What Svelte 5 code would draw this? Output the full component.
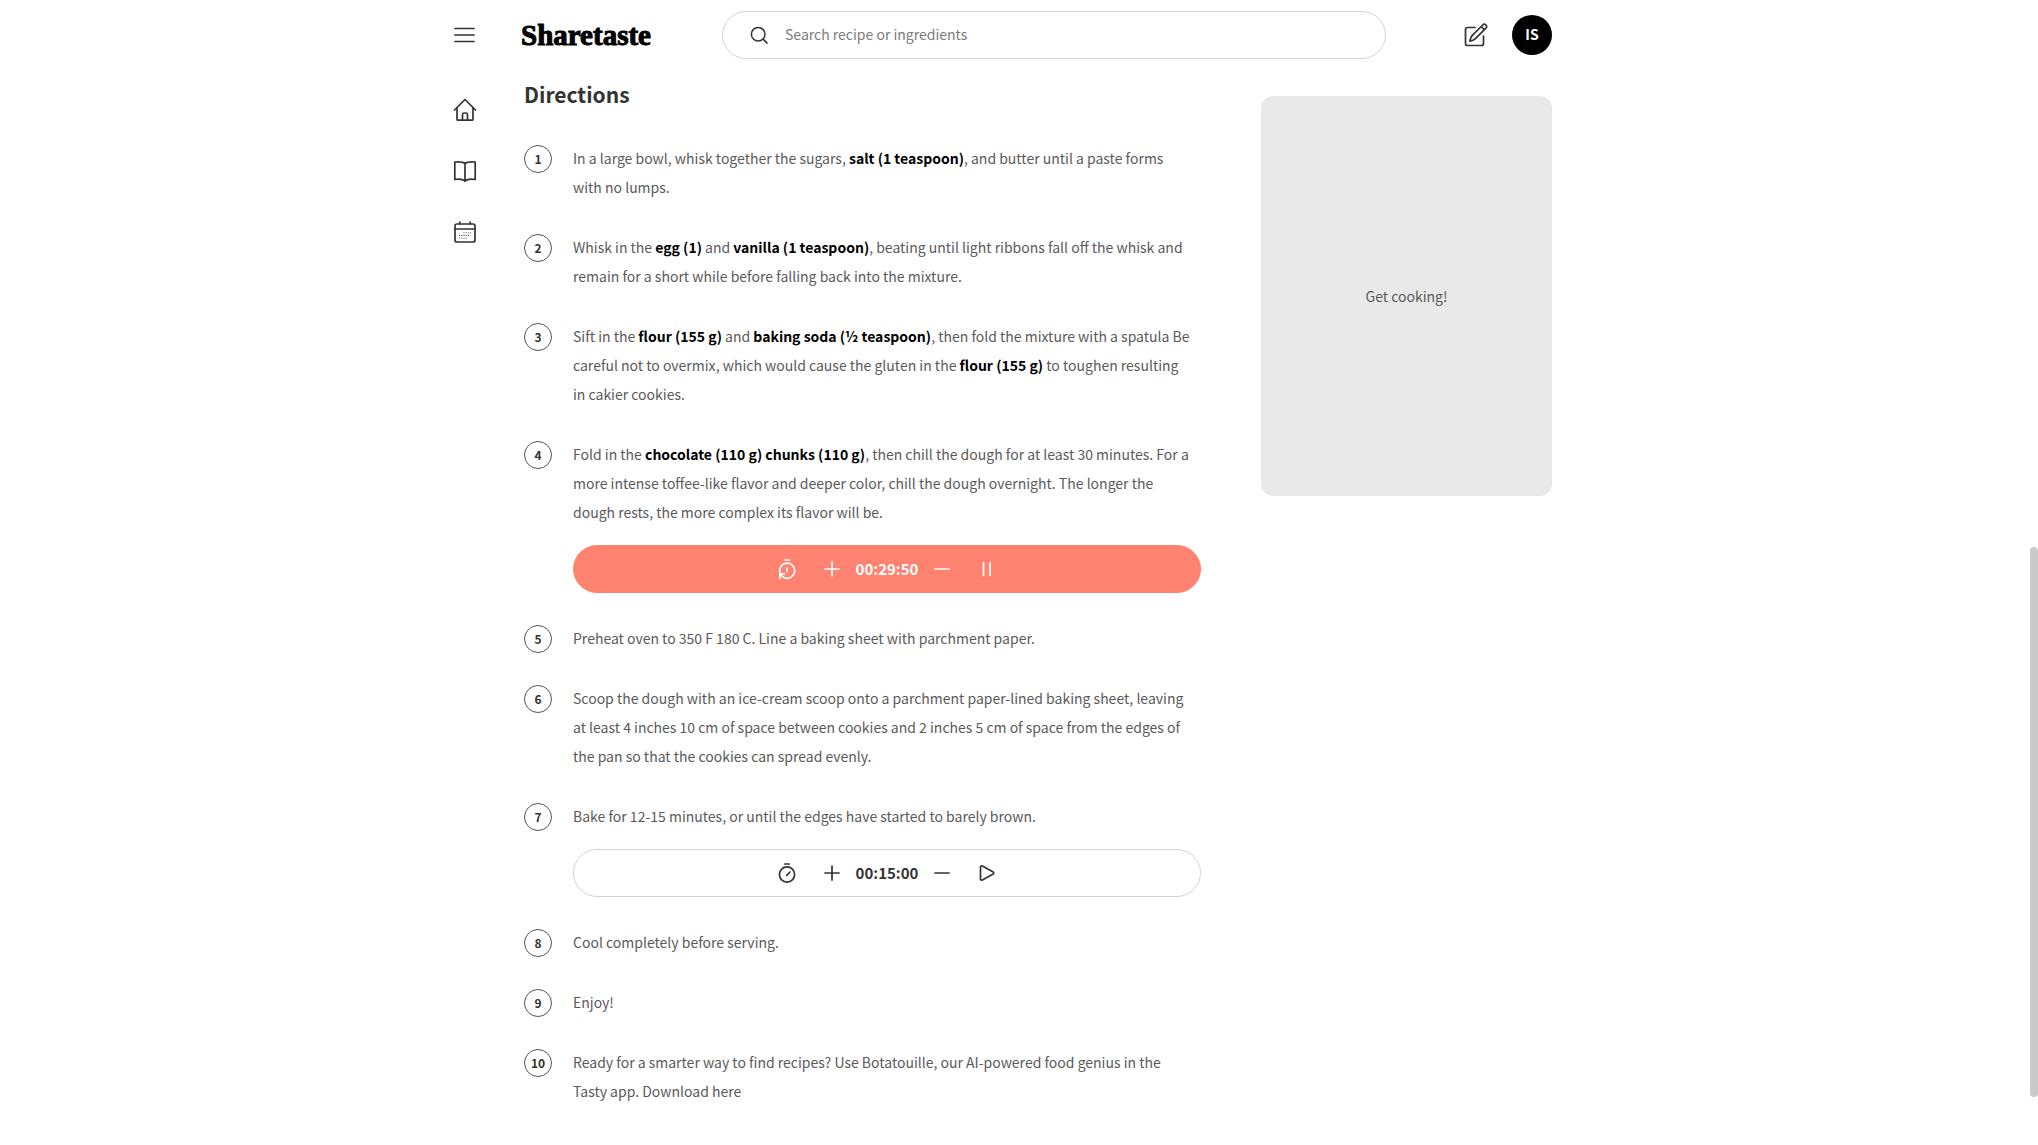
<script>
  let query = $state('');

  const nav = [
    { label: 'Home', icon: 'home' },
    { label: 'Recipes', icon: 'book' },
    { label: 'Meal planner', icon: 'calendar' }
  ];

  // Text wrapped in asterisks is an ingredient and is drawn in bold.
  const steps = [
    { text: 'In a large bowl, whisk together the sugars, *salt (1 teaspoon)*, and butter until a paste forms with no lumps.' },
    { text: 'Whisk in the *egg (1)* and *vanilla (1 teaspoon)*, beating until light ribbons fall off the whisk and remain for a short while before falling back into the mixture.' },
    { text: 'Sift in the *flour (155 g)* and *baking soda (½ teaspoon)*, then fold the mixture with a spatula Be careful not to overmix, which would cause the gluten in the *flour (155 g)* to toughen resulting in cakier cookies.' },
    { text: 'Fold in the *chocolate (110 g)* *chunks (110 g)*, then chill the dough for at least 30 minutes. For a more intense toffee-like flavor and deeper color, chill the dough overnight. The longer the dough rests, the more complex its flavor will be.', timer: { time: '00:29:50', running: true } },
    { text: 'Preheat oven to 350 F 180 C. Line a baking sheet with parchment paper.' },
    { text: 'Scoop the dough with an ice-cream scoop onto a parchment paper-lined baking sheet, leaving at least 4 inches 10 cm of space between cookies and 2 inches 5 cm of space from the edges of the pan so that the cookies can spread evenly.' },
    { text: 'Bake for 12-15 minutes, or until the edges have started to barely brown.', timer: { time: '00:15:00', running: false } },
    { text: 'Cool completely before serving.' },
    { text: 'Enjoy!' },
    { text: 'Ready for a smarter way to find recipes? Use Botatouille, our AI-powered food genius in the Tasty app. Download here' }
  ];
</script>

{#snippet icon(name)}
  <svg class="icon" viewBox="0 0 24 24" stroke-width="1.700" aria-hidden="true">
    {#if name === 'menu'}
      <path d="M2 5.500h19M2 12h19M2 18.500h19" />
    {:else if name === 'search'}
      <circle cx="11.200" cy="11.200" r="6.800" stroke-width="1.500" /><path d="M16.200 16.200L20 20" />
    {:else if name === 'home'}
      <path d="M1.500 12L12 1.500L22.500 12" /><path d="M4 10v11.200a1 1 0 0 0 1 1h14a1 1 0 0 0 1-1V10" /><path d="M9.500 22v-5.500a1.500 1.500 0 0 1 1.500-1.500h2a1.500 1.500 0 0 1 1.500 1.500V22" />
    {:else if name === 'book'}
      <path d="M12 4.500C10 2.800 6 2.600 1.800 3v17.500c4.200-.6 8.200-.3 10.200 1.500c2-1.800 6-2.100 10.200-1.500V3C18 2.600 14 2.800 12 4.500zV22" />
    {:else if name === 'calendar'}
      <rect x="2" y="4" width="20" height="18" rx="2" /><path d="M2 9h20M6.800 2v2M17.200 2v2" />
      <path class="dots" d="M11 12.800h6.700M6.600 15.400h11M6.600 18h6.700" stroke-width="1.100" />
    {:else if name === 'edit'}
      <path d="M11 4.500H3.500a2 2 0 0 0-2 2v14a2 2 0 0 0 2 2h14a2 2 0 0 0 2-2V13" />
      <path d="M8.300 12.400L18.700 2a2.200 2.200 0 0 1 3.200 3.200L11.500 15.600c-1.200 1.200-3.500 2.300-5.700 2.600c.3-2.200 1.300-4.600 2.500-5.800zM17.200 3.500l3.200 3.200" />
    {:else if name === 'stopwatch'}
      <circle cx="12" cy="13.500" r="7.600" /><path d="M9.800 3h4.400" /><path d="M11.700 14.300L15 11" />
    {:else if name === 'restart'}
      <path d="M4.700 15.200A7.600 7.600 0 1 1 9.500 20.800" /><path d="M9.800 3h4.400M12 11v3.500" /><path d="M9.500 16.800H4.800v4.800M5 17l3.200 3.200" />
    {:else if name === 'plus'}
      <path d="M5 12h14M12 5v14" />
    {:else if name === 'minus'}
      <path d="M5 12h14" />
    {:else if name === 'pause'}
      <path d="M8.500 5.500v13M15 5.500v13" />
    {:else if name === 'play'}
      <path d="M5.500 6.200a1.200 1.200 0 0 1 1.900-1.100l10.800 5.900a1.200 1.200 0 0 1 0 2L7.400 18.900a1.200 1.200 0 0 1-1.900-1.100z" />
    {/if}
  </svg>
{/snippet}

<header class="row topbar">
  <button class="plain menu" aria-label="Menu">{@render icon('menu')}</button>
  <a class="logo" href="#home">Sharetaste</a>
  <label class="search">
    {@render icon('search')}
    <input type="text" bind:value={query} aria-label="Search" placeholder="Search recipe or ingredients" />
  </label>
  <div class="account">
    <button class="plain" aria-label="Write a recipe">{@render icon('edit')}</button>
    <button class="avatar">IS</button>
  </div>
</header>

<div class="row page">
  <nav>
    {#each nav as item}
      <a href="#{item.icon}" aria-label={item.label}>{@render icon(item.icon)}</a>
    {/each}
  </nav>

  <main>
    <h2>Directions</h2>
    <ol>
      {#each steps as step, i}
        <li>
          <span class="number">{i + 1}</span>
          <div class="body">
            <p>{#each step.text.split('*') as part, n}{#if n % 2}<b>{part}</b>{:else}{part}{/if}{/each}</p>
            {#if step.timer}
              <div class="timer" class:running={step.timer.running}>
                <button class="plain" aria-label="Reset timer">{@render icon(step.timer.running ? 'restart' : 'stopwatch')}</button>
                <div class="adjust">
                  <button class="plain" aria-label="Add time">{@render icon('plus')}</button>
                  <time>{step.timer.time}</time>
                  <button class="plain" aria-label="Remove time">{@render icon('minus')}</button>
                </div>
                <button class="plain" aria-label={step.timer.running ? 'Pause' : 'Start'}>{@render icon(step.timer.running ? 'pause' : 'play')}</button>
              </div>
            {/if}
          </div>
        </li>
      {/each}
    </ol>
  </main>

  <aside>Get cooking!</aside>
</div>

<div class="scroll-thumb" aria-hidden="true"></div>

<style>
  :global(body) {
    background: #fff;
    color: #333;
    font-family: 'Noto Sans CJK SC', 'Noto Sans', sans-serif;
    font-size: 14px;
  }
  .row {
    box-sizing: border-box;
    max-width: 1132px;
    margin: 0 auto;
    padding-right: 33px;
    display: flex;
  }
  button,
  input {
    font: inherit;
    color: inherit;
  }
  .plain {
    display: flex;
    padding: 0;
    border: 0;
    background: none;
    cursor: pointer;
  }
  .icon {
    display: block;
    width: 24px;
    height: 24px;
    flex: none;
    fill: none;
    stroke: currentColor;
    stroke-linecap: round;
    stroke-linejoin: round;
  }
  .dots {
    stroke-dasharray: 0 2.2;
  }
  .topbar {
    align-items: center;
    height: 70px;
  }
  .menu {
    width: 68px;
  }
  .logo {
    width: 201px;
    color: #000;
    font: bold 29px/40px 'Liberation Serif', serif;
    text-decoration: none;
    -webkit-text-stroke: 1px #000;
  }
  .search {
    box-sizing: border-box;
    flex: 1;
    display: flex;
    align-items: center;
    gap: 14px;
    height: 48px;
    padding: 0 24px;
    border: 1px solid #d4d4d4;
    border-radius: 24px;
  }
  .search input {
    flex: 1;
    min-width: 0;
    padding: 0 0 2px;
    border: 0;
    outline: 0;
    background: none;
  }
  .search input::placeholder {
    color: #7c7c7c;
  }
  .account {
    display: flex;
    align-items: center;
    justify-content: space-between;
    width: 88px;
    margin-left: 78px;
  }
  .avatar {
    width: 40px;
    height: 40px;
    padding: 0 0 2px;
    border: 0;
    border-radius: 50%;
    background: #000;
    color: #fff;
    font-size: 14px;
    font-weight: 700;
  }
  nav {
    display: flex;
    flex-direction: column;
    gap: 37px;
    width: 71px;
    padding-top: 28px;
  }
  nav a {
    color: #333;
  }
  main {
    flex: 1;
    min-width: 0;
  }
  h2 {
    margin: 0 0 34px;
    padding-top: 8px;
    font-size: 21px;
    line-height: 32px;
    font-weight: 700;
  }
  ol {
    display: flex;
    flex-direction: column;
    gap: 31px;
    margin: 0;
    padding: 0;
    list-style: none;
  }
  li {
    display: flex;
    gap: 21px;
  }
  .number {
    box-sizing: border-box;
    flex: none;
    width: 28px;
    height: 28px;
    margin-top: 1px;
    border: 1px solid #555;
    border-radius: 50%;
    font-size: 12px;
    font-weight: 700;
    line-height: 26px;
    text-align: center;
  }
  .body {
    flex: 1;
    min-width: 0;
  }
  p {
    margin: 0;
    padding-right: 8px;
    color: #5a5a5a;
    line-height: 29px;
  }
  b {
    color: #000;
    font-weight: 700;
  }
  .timer {
    box-sizing: border-box;
    display: flex;
    align-items: center;
    justify-content: center;
    gap: 21px;
    height: 48px;
    margin-top: 18px;
    border: 1px solid #d4d4d4;
    border-radius: 24px;
  }
  .running {
    border-color: #ff8370;
    background: #ff8370;
    color: #fff;
  }
  .adjust {
    display: flex;
    align-items: center;
    gap: 12px;
  }
  time {
    padding-bottom: 2px;
    font-size: 15px;
    font-weight: 700;
  }
  aside {
    box-sizing: border-box;
    display: flex;
    align-items: center;
    justify-content: center;
    width: 291px;
    height: 400px;
    margin: 26px 0 0 60px;
    border-radius: 12px;
    background: #e9e9e9;
    color: #5a5a5a;
  }
  .scroll-thumb {
    position: fixed;
    top: 547px;
    right: 0;
    width: 8px;
    height: 550px;
    border-radius: 4px;
    background: #cacaca;
  }
</style>
